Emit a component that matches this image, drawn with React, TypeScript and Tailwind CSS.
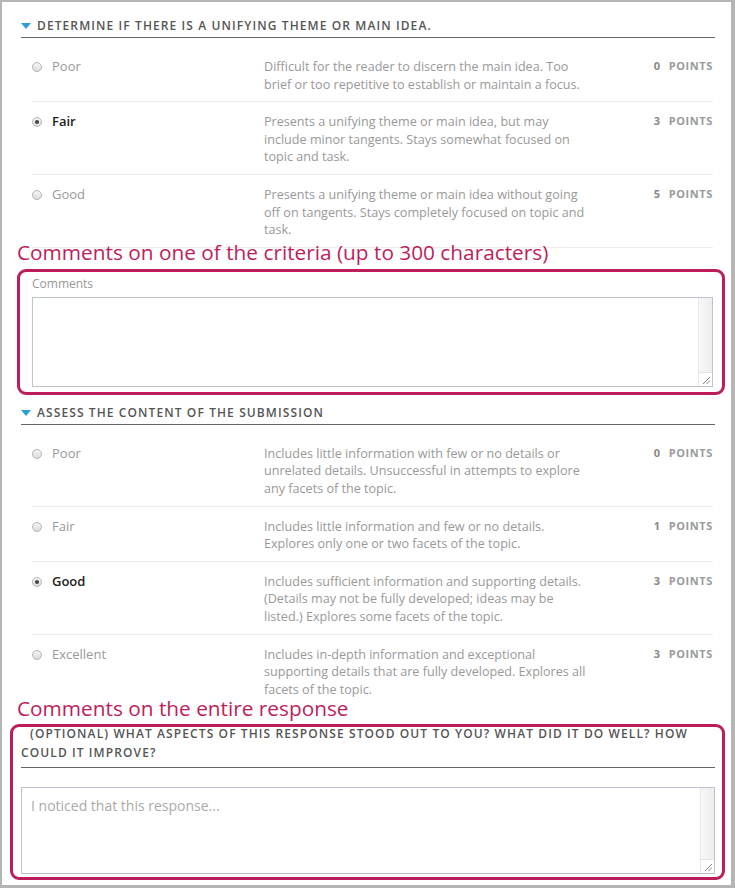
import React from "react";

type Row = {
    label: string;
    lines: string[];
    points: number;
    selected?: boolean;
};

const themeRows: Row[] = [
    {
        label: "Poor",
        lines: ["Difficult for the reader to discern the main idea. Too", "brief or too repetitive to establish or maintain a focus."],
        points: 0,
    },
    {
        label: "Fair",
        lines: ["Presents a unifying theme or main idea, but may", "include minor tangents. Stays somewhat focused on", "topic and task."],
        points: 3,
        selected: true,
    },
    {
        label: "Good",
        lines: ["Presents a unifying theme or main idea without going", "off on tangents. Stays completely focused on topic and", "task."],
        points: 5,
    },
];

const contentRows: Row[] = [
    {
        label: "Poor",
        lines: ["Includes little information with few or no details or", "unrelated details. Unsuccessful in attempts to explore", "any facets of the topic."],
        points: 0,
    },
    {
        label: "Fair",
        lines: ["Includes little information and few or no details.", "Explores only one or two facets of the topic."],
        points: 1,
    },
    {
        label: "Good",
        lines: ["Includes sufficient information and supporting details.", "(Details may not be fully developed; ideas may be", "listed.) Explores some facets of the topic."],
        points: 3,
        selected: true,
    },
    {
        label: "Excellent",
        lines: ["Includes in-depth information and exceptional", "supporting details that are fully developed. Explores all", "facets of the topic."],
        points: 3,
    },
];

function Triangle() {
    return (
        <svg width="10" height="6" viewBox="0 0 10 6" className="shrink-0">
            <path d="M0 0 L10 0 L5 6 Z" fill="#2b9fd9" />
        </svg>
    );
}

function Radio({ checked }: { checked?: boolean }) {
    return (
        <span className="flex h-[10px] w-[10px] shrink-0 items-center justify-center rounded-full border border-[#b5b5b5] bg-gradient-to-b from-[#f4f4f4] to-[#dcdcdc]">
            {checked && <span className="h-[4px] w-[4px] rounded-full bg-[#444]" />}
        </span>
    );
}

function SectionHeader({ title }: { title: string }) {
    return (
        <div className="flex items-center gap-[6px] border-b border-[#666] pb-[3px]">
            <Triangle />
            <span className="text-[12px] font-semibold uppercase leading-[16px] tracking-[1.1px] text-[#555]">{title}</span>
        </div>
    );
}

function CriterionRow({ row, last }: { row: Row; last?: boolean }) {
    return (
        <div className={"flex pt-[11px] " + (last ? "pb-0" : "border-b border-[#ececec] pb-[8px]")}>
            <div className="flex h-[18px] w-[232px] shrink-0 items-center gap-[10px]">
                <Radio checked={row.selected} />
                <span className={"text-[13px] " + (row.selected ? "font-semibold text-[#222]" : "text-[#999]")}>{row.label}</span>
            </div>
            <div className="flex-1 text-[12.6px] leading-[17.6px] text-[#999]">
                {row.lines.map((l) => (
                    <div key={l} className="whitespace-nowrap">{l}</div>
                ))}
            </div>
            <div className="flex gap-[8px] pt-[1px] text-[11px] font-bold leading-[14px] tracking-[0.6px]">
                <span className="text-[#888]">{row.points}</span>
                <span className="text-[#9a9a9a]">POINTS</span>
            </div>
        </div>
    );
}

function FakeTextarea({ height, placeholder }: { height: string; placeholder?: string }) {
    return (
        <div className={"flex border border-[#bcc3cc] bg-white " + height}>
            <div className="flex-1 pl-[9px] pt-[8px] text-[14px] leading-[20px] text-[#aaa]">{placeholder}</div>
            <div className="flex w-[14px] flex-col border-l border-[#e8e8e8]">
                <div className="flex-1 bg-gradient-to-r from-[#f7f7f7] to-[#eeeeee]" />
                <div className="flex h-[14px] items-end justify-end border-t border-[#e3e3e3] bg-white p-[2px]">
                    <svg width="8" height="8" viewBox="0 0 8 8">
                        <path d="M1 8 L8 1 M4.5 8 L8 4.5" stroke="#777" strokeWidth="0.9" />
                    </svg>
                </div>
            </div>
        </div>
    );
}

export default function App() {
    const annotation = "block text-[20.8px] leading-[24px] text-[#bd1e5b]";

    return (
        <div
            className="h-[888px] w-[735px] overflow-hidden border-b-[3px] border-l-2 border-r-[4px] border-t-2 border-[#b5b5b5] bg-white pl-[19px] pr-[16px] pt-[16px]"
            style={{ fontFamily: '"Open Sans", "Liberation Sans", sans-serif' }}
        >
            {/* criterion 1 */}
            <SectionHeader title="Determine if there is a unifying theme or main idea." />
            <div className="ml-[11px] mr-[2px] mt-[9px]">
                {themeRows.map((r) => (
                    <CriterionRow key={r.label} row={r} />
                ))}
            </div>

            <span className={annotation + " -ml-[4px] mt-[-8px]"}>Comments on one of the criteria (up to 300 characters)</span>

            <div className="-ml-[4px] -mr-[10px] mt-[5px] rounded-[9px] border-[3px] border-[#bd1e5b] pb-[5px] pl-[12px] pr-[9px] pt-[4px]">
                <div className="text-[12px] leading-[16px] text-[#999]">Comments</div>
                <div className="mt-[5px]">
                    <FakeTextarea height="h-[90px]" />
                </div>
            </div>

            {/* criterion 2 */}
            <div className="pt-[10px]">
                <SectionHeader title="Assess the content of the submission" />
            </div>
            <div className="ml-[11px] mr-[2px] mt-[9px]">
                {contentRows.map((r, i) => (
                    <CriterionRow key={r.label} row={r} last={i === contentRows.length - 1} />
                ))}
            </div>

            <span className={annotation + " -ml-[4px] mt-[-2px]"}>Comments on the entire response</span>

            <div className="-ml-[11px] -mr-[10px] mt-[4px] rounded-[9px] border-[3px] border-[#bd1e5b] pb-[3px] pl-[8px] pr-[7px]">
                <div className="mt-[-2px] border-b border-[#666] pb-[5px] text-[12px] font-semibold leading-[18.3px] tracking-[1.1px] text-[#555]">
                    <span className="pl-[9px]">(OPTIONAL) WHAT ASPECTS OF THIS RESPONSE STOOD OUT TO YOU? WHAT DID IT DO WELL? HOW</span>
                    <br />
                    COULD IT IMPROVE?
                </div>
                <div className="mt-[19px]">
                    <FakeTextarea height="h-[87px]" placeholder="I noticed that this response..." />
                </div>
            </div>
        </div>
    );
}
